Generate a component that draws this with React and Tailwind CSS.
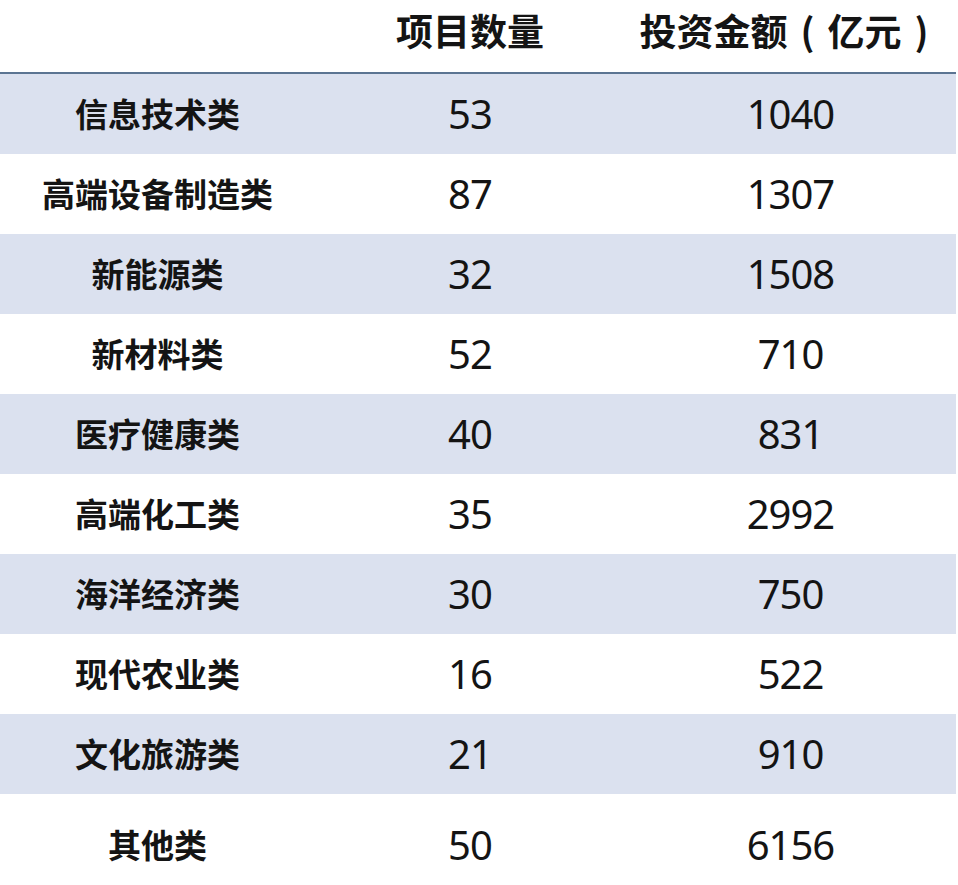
import React from "react";

const rows = [
  { name: "信息技术类", count: 53, amount: 1040 },
  { name: "高端设备制造类", count: 87, amount: 1307 },
  { name: "新能源类", count: 32, amount: 1508 },
  { name: "新材料类", count: 52, amount: 710 },
  { name: "医疗健康类", count: 40, amount: 831 },
  { name: "高端化工类", count: 35, amount: 2992 },
  { name: "海洋经济类", count: 30, amount: 750 },
  { name: "现代农业类", count: 16, amount: 522 },
  { name: "文化旅游类", count: 21, amount: 910 },
  { name: "其他类", count: 50, amount: 6156 },
];

const CJK = "font-['Noto_Sans_CJK_SC',sans-serif]";
const NUM = "font-['Noto_Sans','Noto_Sans_CJK_SC',sans-serif]";

export default function App() {
  return (
    <div className="w-[958px] h-[885px] bg-white text-[#141414] overflow-hidden">
      <div className="w-[956px]">
        {/* header */}
        <div
          className={`grid grid-cols-[315px_310px_331px] h-[72px] items-center pb-[10px] font-bold text-[37px] ${CJK}`}
        >
          <div />
          <div className="text-center">项目数量</div>
          <div className="text-center whitespace-nowrap">
            投资金额
            <span className="inline-block w-[40px] text-center">(</span>
            亿元
            <span className="inline-block w-[40px] text-center">)</span>
          </div>
        </div>
        <div className="h-[2px] bg-[#5b7492]" />

        {rows.map((r, i) => {
          const last = i === rows.length - 1;
          return (
            <div
              key={r.name}
              className={`grid grid-cols-[315px_310px_331px] items-center ${
                i % 2 === 0 ? "bg-[#dbe1ef]" : "bg-white"
              } ${last ? "h-[91px] pt-[10px]" : "h-[80px]"}`}
            >
              <div className={`text-center font-bold text-[33px] ${CJK}`}>{r.name}</div>
              <div className={`text-center text-[40px] tracking-[-1px] ${NUM}`}>{r.count}</div>
              <div className={`text-center text-[40px] tracking-[-1px] ${NUM}`}>{r.amount}</div>
            </div>
          );
        })}
      </div>
    </div>
  );
}
